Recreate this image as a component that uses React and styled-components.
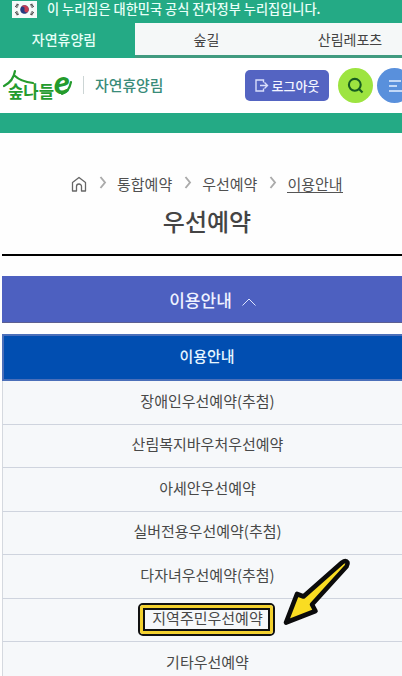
import React from "react";
import styled, { createGlobalStyle } from "styled-components";

const GlobalStyle = createGlobalStyle`
  * {
    box-sizing: border-box;
  }

  body {
    margin: 0;
    background-color: #fefefe;
    font-family: "Noto Sans CJK KR", "Noto Sans", sans-serif;
    color: #444;
  }
`;

const Container = styled.div`
  width: 402px;
  height: 676px;
  overflow: hidden;
`;

const Notice = styled.div`
  height: 23px;
  display: flex;
  align-items: center;
  padding: 0 0 5px 12px;
  gap: 10px;
  background-color: #24aa85;
  color: #e9fff8;
  font-size: 13.2px;
  font-weight: 500;
  line-height: 18px;
  white-space: nowrap;

  svg {
    flex: none;
  }
`;

const SiteTabs = styled.nav`
  height: 35px;
  display: grid;
  grid-template-columns: 135px 143px 144px;
`;

const SiteTab = styled.a`
  display: flex;
  align-items: center;
  justify-content: center;
  font-size: 14px;
  padding-bottom: ${({ $active }) => ($active ? "3px" : "0")};
  padding-right: ${({ $active }) => ($active ? "7px" : "0")};
  font-weight: ${({ $active }) => ($active ? 500 : 400)};
  color: ${({ $active }) => ($active ? "#e6fff7" : "#444")};
  background-color: ${({ $active }) => ($active ? "#24aa85" : "#f5f8f8")};
  border-bottom: ${({ $active }) => ($active ? "none" : "3px solid #419b80")};
`;

const Header = styled.header`
  width: 412px;
  height: 55px;
  display: flex;
  align-items: center;
  padding-left: 2px;
  background-color: #fff;
`;

const LogoMark = styled.svg`
  width: 70px;
  height: 38px;
  flex: none;
  overflow: visible;
`;

const SiteName = styled.span`
  margin: -2px 0 0 11px;
  padding-left: 11px;
  border-left: 1px solid #ccd5d5;
  color: #398b79;
  font-size: 14.9px;
  font-weight: 500;
  line-height: 18px;
`;

const Logout = styled.button`
  width: 84px;
  height: 31px;
  margin: 0 9px 0 auto;
  padding: 0 0 1px;
  display: flex;
  align-items: center;
  justify-content: center;
  gap: 3px;
  border: none;
  border-radius: 5px;
  background-color: #5464c2;
  color: #f3f5ff;
  font-family: inherit;
  font-size: 13px;
  font-weight: 500;
`;

const RoundButton = styled.button`
  width: 35px;
  height: 35px;
  flex: none;
  padding: 0;
  display: flex;
  align-items: center;
  justify-content: center;
  border: none;
  border-radius: 50%;
  background-color: ${({ $color }) => $color};

  & + & {
    margin-left: 4px;
  }
`;

const Band = styled.div`
  height: 20px;
  background-color: #24aa85;
`;

const Breadcrumb = styled.div`
  height: 22px;
  margin-top: 40px;
  padding-left: 71px;
  display: flex;
  align-items: center;
  font-size: 15px;
  line-height: 22px;
  color: #505050;
  white-space: nowrap;
`;

const Crumb = styled.a`
  line-height: ${({ $current }) => ($current ? "17px" : "22px")};
  border-bottom: ${({ $current }) => ($current ? "1px solid #555" : "none")};
`;

const Separator = styled.svg`
  flex: none;
  width: 8px;
  height: 13px;
  margin: -3px 10px 0 12px;
`;

const Title = styled.h1`
  height: 59px;
  margin: 0 0 0 2px;
  padding: 8px 0 0 10px;
  color: #444;
  font-size: 24px;
  font-weight: 500;
  line-height: 36px;
  text-align: center;
`;

const Content = styled.main`
  margin-left: 2px;
  border-top: 2px solid #000;
`;

const MenuToggle = styled.div`
  height: 47px;
  margin: 20px 0 11px;
  padding: 1px 0 0 21px;
  display: flex;
  align-items: center;
  justify-content: center;
  gap: 10px;
  background-color: #4d60c0;
  border-bottom: 1px solid #5c5f91;
  color: #eef2ff;
  font-size: 17px;
  font-weight: 500;

  svg {
    margin-top: 4px;
  }
`;

const Menu = styled.ul`
  width: 410px;
  margin: 0;
  padding: 0;
  list-style: none;
`;

const MenuItem = styled.li`
  height: ${({ $active }) => ($active ? "47px" : "43.5px")};
  padding-bottom: 4px;
  display: flex;
  align-items: center;
  justify-content: center;
  font-size: 15px;
  font-weight: ${({ $active }) => ($active ? 500 : 400)};
  color: ${({ $active }) => ($active ? "#e6f6ff" : "#484848")};
  background-color: ${({ $active }) => ($active ? "#014eb1" : "#f6f8fa")};
  border: ${({ $active }) => ($active ? "2px solid #4b6fb9" : "0")};
  border-bottom: ${({ $active }) =>
    $active ? "2px solid #4b6fb9" : "1px solid #cfd4de"};
  border-left: ${({ $active }) =>
    $active ? "2px solid #4b6fb9" : "1px solid #d5d9df"};
`;

const Marked = styled.span`
  position: relative;
`;

const Highlight = styled.div`
  position: absolute;
  left: -14px;
  top: -4px;
  width: 137px;
  height: 33px;
  border: 2px solid #111;
  border-radius: 5px;
  background-color: transparent;

  &::before {
    content: "";
    position: absolute;
    inset: 0;
    border: 3px solid #f3d12f;
    border-radius: 3px;
  }

  &::after {
    content: "";
    position: absolute;
    inset: 3px;
    border: 2px solid #111;
  }
`;

const Arrow = styled.svg`
  position: absolute;
  left: 128px;
  top: -52px;
  width: 74px;
  height: 72px;
`;

const Flag = () => (
  <svg width="25" height="17" viewBox="0 0 25 17">
    <rect width="25" height="17" fill="#f5faf9" />
    <g transform="rotate(22 12.5 8.5)">
      <circle cx="12.5" cy="8.5" r="4.3" fill="#263b80" />
      <path
        d="M8.2 8.5a4.3 4.3 0 0 1 8.6 0a2.15 2.15 0 0 1-4.3 0a2.15 2.15 0 0 0-4.3 0"
        fill="#c83b50"
      />
    </g>
    <g stroke="#333" strokeWidth="2.6" strokeDasharray="0.9 0.5">
      <path d="M4 6.2l2-3.1M19 3.1l2 3.1M4 10.8l2 3.1M19 13.9l2-3.1" />
    </g>
  </svg>
);

const LogoE = styled.tspan`
  font-family: Lato, sans-serif;
  font-size: 33px;
  font-style: italic;
  font-weight: 900;
`;

const Logo = () => (
  <LogoMark viewBox="0 0 70 38">
    <text
      x="6"
      y="31"
      fill="#249b2d"
      fontFamily="Noto Sans CJK KR, sans-serif"
      fontSize="17"
      fontWeight="700"
      textLength="62"
      lengthAdjust="spacingAndGlyphs"
    >
      숲나들
      <LogoE dy="-4">e</LogoE>
    </text>
    <path
      d="M13 4C12 10 8 16 2 19M13 9C17 13 23 15 31 16M60 27Q67 25 69 15"
      fill="none"
      stroke="#249b2d"
      strokeWidth="2.2"
      strokeLinecap="round"
    />
  </LogoMark>
);

const Chevron = () => (
  <Separator viewBox="0 0 8 13">
    <path d="M1.5 1l4.5 5.5L1.5 12" fill="none" stroke="#aaa" strokeWidth="1.9" />
  </Separator>
);

const items = [
  "장애인우선예약(추첨)",
  "산림복지바우처우선예약",
  "아세안우선예약",
  "실버전용우선예약(추첨)",
  "다자녀우선예약(추첨)",
  "지역주민우선예약",
  "기타우선예약",
];

const App = () => {
  return (
    <Container>
      <GlobalStyle />
      <Notice>
        <Flag />
        <span>이 누리집은 대한민국 공식 전자정부 누리집입니다.</span>
      </Notice>
      <SiteTabs>
        <SiteTab $active>자연휴양림</SiteTab>
        <SiteTab>숲길</SiteTab>
        <SiteTab>산림레포츠</SiteTab>
      </SiteTabs>
      <Header>
        <Logo />
        <SiteName>자연휴양림</SiteName>
        <Logout>
          <svg width="14" height="13" viewBox="0 0 14 13">
            <path
              d="M8.5 3.5V1H1v11h7.5V9.5M5 6.5h7.5M9.5 3.5l3 3-3 3"
              fill="none"
              stroke="#d9defb"
              strokeWidth="1.4"
            />
          </svg>
          로그아웃
        </Logout>
        <RoundButton $color="#9de440">
          <svg width="17" height="17" viewBox="0 0 17 17">
            <g fill="none" stroke="#175d20" strokeWidth="2.1">
              <circle cx="7.8" cy="7.8" r="5.9" />
              <path d="M11.5 11.5l4 4" />
            </g>
          </svg>
        </RoundButton>
        <RoundButton $color="#5990dc">
          <svg width="14" height="12" viewBox="0 0 14 12">
            <path d="M1 1h12M1 6h8M1 11h13" stroke="#e5f0ff" strokeWidth="1.4" />
          </svg>
        </RoundButton>
      </Header>
      <Band />
      <Breadcrumb>
        <svg width="16" height="16" viewBox="0 0 16 16">
          <path
            d="M1.5 6.5L8 1.5l6.5 5V15h-4v-4.5a2.5 2.5 0 0 0-5 0V15h-4z"
            fill="none"
            stroke="#666"
            strokeWidth="1.3"
            strokeLinejoin="round"
          />
        </svg>
        <Chevron />
        <Crumb>통합예약</Crumb>
        <Chevron />
        <Crumb>우선예약</Crumb>
        <Chevron />
        <Crumb $current>이용안내</Crumb>
      </Breadcrumb>
      <Title>우선예약</Title>
      <Content>
        <MenuToggle>
          이용안내
          <svg width="14" height="8" viewBox="0 0 14 8">
            <path d="M0.5 7.5l6.5-6.5 6.5 6.5" fill="none" stroke="#dfe5ff" />
          </svg>
        </MenuToggle>
        <Menu>
          <MenuItem $active>이용안내</MenuItem>
          {items.map((item) => (
            <MenuItem key={item}>
              {item === "지역주민우선예약" ? (
                <Marked>
                  {item}
                  <Highlight />
                  <Arrow viewBox="0 0 74 72">
                    <path
                      d="M62 7.5Q66 4.5 67.5 7.5Q68 9 66.5 11.5L32 49.5L35.5 56L6 67.5L17 39L23.5 41.5Z"
                      fill="#f9dc22"
                      stroke="#0b0b0b"
                      strokeWidth="4.6"
                      strokeLinejoin="round"
                    />
                  </Arrow>
                </Marked>
              ) : (
                item
              )}
            </MenuItem>
          ))}
        </Menu>
      </Content>
    </Container>
  );
};

export default App;
